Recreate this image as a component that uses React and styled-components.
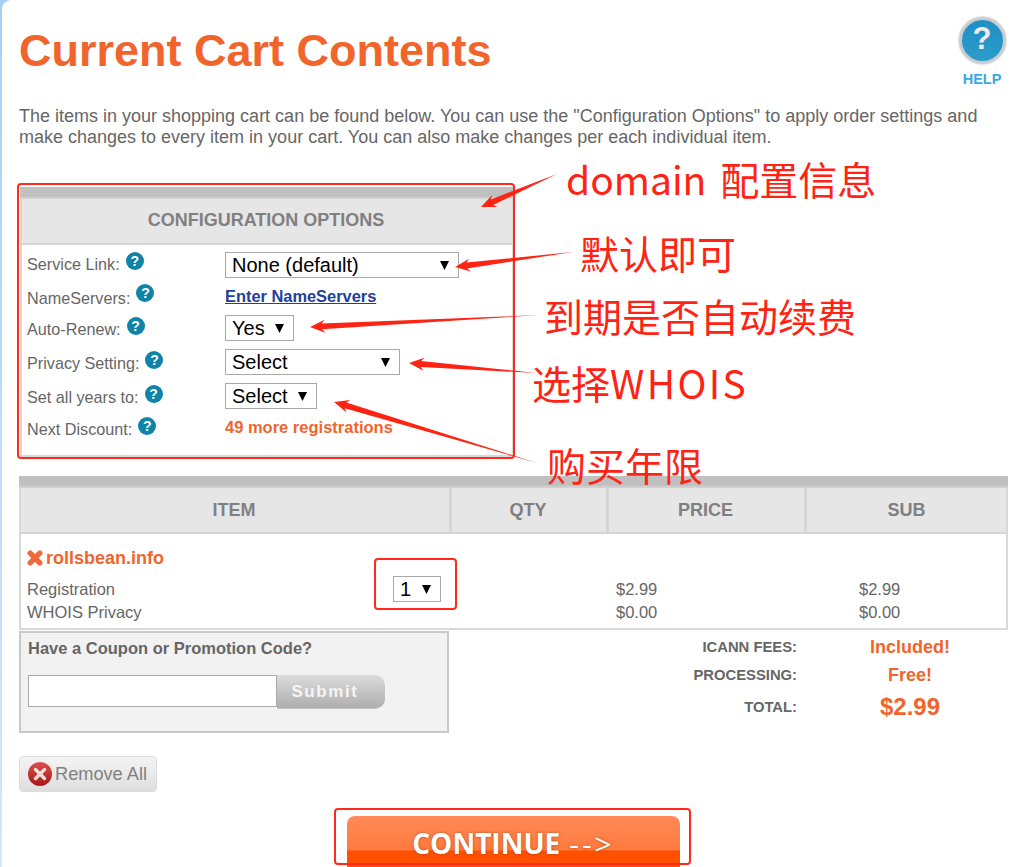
import React from 'react';
import styled, { createGlobalStyle } from 'styled-components';

const GlobalStyle = createGlobalStyle`
  html, body {
    margin: 0;
    padding: 0;
    height: 867px;
    overflow: hidden;
    background: linear-gradient(#a9cff6, #d4e7fb);
  }
  * { box-sizing: border-box; }
`;

const Page = styled.div`
  position: relative;
  width: 1016px;
  height: 867px;
  margin-left: 2px;
  padding: 26px 0 0 17px;
  overflow: hidden;
  background: #fff;
  border-top-left-radius: 9px;
  font-family: "Liberation Sans", Arial, sans-serif;
  color: #666;
`;

const TitleRow = styled.div`
  display: flex;
  justify-content: space-between;
  height: 70px;
`;

const Title = styled.h1`
  margin: 0;
  font-size: 45px;
  line-height: 50px;
  font-weight: 700;
  color: #f1652c;
`;

const HelpLink = styled.div`
  display: flex;
  flex-direction: column;
  align-items: center;
  width: 48px;
  margin: -9px 12px 0 0;
  font-size: 14.5px;
  font-weight: 700;
  line-height: 16px;
  color: #3ba8e0;
`;

const HelpBadge = styled.div`
  display: flex;
  align-items: center;
  justify-content: center;
  width: 47px;
  height: 47px;
  margin-bottom: 7px;
  padding-bottom: 3px;
  border: 3px solid #c9cccf;
  border-radius: 50%;
  background: linear-gradient(#1f8fc4, #2c9ccc);
  box-shadow: 0 0 2px #999;
  color: #ececec;
  font-size: 31px;
  font-weight: 700;
`;

const Intro = styled.p`
  width: 975px;
  margin: 10px 0 0;
  font-size: 18px;
  line-height: 21px;
`;

const Panel = styled.section`
  width: 494px;
  height: 270px;
  margin: 39px 0 0 1px;
  border: 2px solid #d8d8d8;
  border-top: 0;
`;

const GrayBar = styled.div`
  height: 12px;
  margin: 0 -2px;
  background: #c0c0c0;
  border-bottom: 2px solid #d0d0d0;
`;

const PanelHead = styled.div`
  display: flex;
  align-items: center;
  justify-content: center;
  height: 46px;
  padding: 0 2px 2px 0;
  background: #e6e6e6;
  border-bottom: 2px solid #d5d5d5;
  color: #808080;
  font-size: 18px;
  font-weight: 700;
`;

const OptionGrid = styled.div`
  display: grid;
  grid-template-columns: 198px 1fr;
  grid-template-rows: 31px 33px 34px 34px 34px 30px;
  padding: 4px 0 0 5px;
  align-items: center;
`;

const Label = styled.div`
  display: flex;
  align-items: flex-start;
  gap: 6px;
  margin-top: -2px;
  padding-top: ${p => p.$nudge || 0}px;
  font-size: 16.2px;
  line-height: 20px;
`;

const Info = styled.span`
  display: inline-flex;
  align-items: center;
  justify-content: center;
  width: 18px;
  height: 18px;
  margin-top: ${p => (p.$nudge ? -4 : -2)}px;
  border-radius: 50%;
  background: #0f83a8;
  color: #fff;
  font-size: 14px;
  font-weight: 700;
`;

const ValueCell = styled.div`
  margin-top: ${p => p.$lift || 0}px;
`;

const StrongLink = styled.a`
  font-size: 16.4px;
  font-weight: 700;
  color: #22409a;
  text-decoration: underline;
`;

const Discount = styled.span`
  font-size: 16.5px;
  font-weight: 700;
  color: #f1652c;
`;

const SelectShell = styled.div`
  position: relative;
  width: ${p => p.$width}px;
  height: 26px;
`;

const NativeSelect = styled.select`
  display: block;
  width: 100%;
  height: 100%;
  padding: 0 0 0 6px;
  border: 1px solid #a9a9a9;
  border-radius: 0;
  background: #fff;
  appearance: none;
  font-family: "Liberation Sans", Arial, sans-serif;
  font-size: 20px;
  color: #000;
`;

const Caret = styled.svg`
  position: absolute;
  top: 9px;
  right: 10px;
  width: 9px;
  height: 9px;
  pointer-events: none;
`;

const CartGrid = styled.div`
  width: 989px;
  margin: 19px 0 0;
  border: 2px solid #d8d8d8;
  border-top: 0;
`;

const HeadRow = styled.div`
  display: grid;
  grid-template-columns: 428px 3px 154px 3px 195px 3px 199px;
  height: 46px;
  border-bottom: 2px solid #d5d5d5;
  background: #d5d5d5;
`;

const HeadCell = styled.div`
  display: flex;
  align-items: center;
  justify-content: center;
  grid-column: ${p => p.$col};
  padding-right: ${p => (p.$col === 7 ? 0 : 2)}px;
  background: #e6e6e6;
  color: #808080;
  font-size: 18px;
  font-weight: 700;
`;

const ItemBody = styled.div`
  display: grid;
  grid-template-columns: 366px 223px 243px 1fr;
  grid-template-rows: 43px 23px 23px;
  height: 94px;
  padding-left: 6px;
  font-size: 16.5px;
  line-height: 20px;
  align-items: center;
`;

const Domain = styled.div`
  grid-column: 1 / -1;
  display: flex;
  align-items: center;
  gap: 3px;
  padding-top: 4px;
  font-size: 18px;
  font-weight: 700;
  color: #f1652c;
`;

const LineCell = styled.div`
  grid-column: ${p => p.$col};
  grid-row: ${p => p.$row};
`;

const QtyCell = styled.div`
  grid-column: 2;
  grid-row: 2 / 4;
  align-self: start;
  margin-top: -1px;
`;

const Bottom = styled.div`
  display: flex;
`;

const Coupon = styled.form`
  flex: none;
  width: 430px;
  height: 102px;
  margin-top: 1px;
  padding: 5px 7px;
  background: #f2f2f2;
  border: 2px solid #c8c8c8;
`;

const CouponTitle = styled.div`
  font-size: 16.5px;
  line-height: 20px;
  font-weight: 700;
  color: #666;
`;

const CouponRow = styled.div`
  display: flex;
  align-items: flex-start;
  margin-top: 17px;
`;

const CouponInput = styled.input`
  width: 249px;
  height: 32px;
  padding: 0 4px;
  border: 1px solid #a9a9a9;
  background: #fff;
`;

const SubmitButton = styled.button`
  width: 108px;
  height: 34px;
  padding: 0 12px 0 0;
  border: 0;
  border-radius: 0 10px 10px 0;
  background: linear-gradient(#dcdcdc, #aeaeae);
  border-bottom: 1px solid #c4c4c4;
  color: #f4f4f4;
  font-family: "Liberation Sans", Arial, sans-serif;
  font-size: 17px;
  font-weight: 700;
  letter-spacing: 1.6px;
`;

const Totals = styled.div`
  display: grid;
  grid-template-columns: 348px 226px;
  grid-template-rows: 28px 28px 36px;
  margin-top: 3px;
  align-items: center;
`;

const TotalLabel = styled.div`
  font-size: 14.8px;
  font-weight: 700;
  text-align: right;
  color: #666;
`;

const TotalValue = styled.div`
  font-size: ${p => p.$size || 18}px;
  font-weight: 700;
  text-align: center;
  color: #f1652c;
`;

const RemoveAll = styled.button`
  display: flex;
  align-items: center;
  gap: 2px;
  width: 138px;
  height: 36px;
  margin-top: 23px;
  padding: 0 0 0 7px;
  border: 1px solid #dcdcdc;
  border-radius: 4px;
  background: linear-gradient(#f4f4f4, #dedede);
  color: #808080;
  font-family: "Liberation Sans", Arial, sans-serif;
  font-size: 18.2px;
`;

const ContinueWrap = styled.div`
  display: flex;
  margin: 24px 0 0 328px;
`;

const ContinueButton = styled.button`
  display: flex;
  align-items: center;
  justify-content: center;
  gap: 9px;
  flex: none;
  width: 333px;
  height: 60px;
  padding: 0 0 6px;
  border: 0;
  border-radius: 8px 8px 0 0;
  background: linear-gradient(#ff8a58 0, #ff7a3e 57%, #ff5000 58%, #ff5000 100%);
  color: #fff;
  font-family: "Open Sans", sans-serif;
  font-size: 28px;
  font-weight: 700;
  text-shadow: 0 0 3px rgba(120, 50, 0, 0.6);
`;

const ContinueArrow = styled.span`
  font-size: 30px;
  font-weight: 400;
  letter-spacing: 3px;
`;

const Overlay = styled.svg`
  position: absolute;
  top: 0;
  left: -2px;
  width: 1018px;
  height: 867px;
  pointer-events: none;
`;

const RedBox = styled.div`
  position: absolute;
  left: ${p => p.$x - 2}px;
  top: ${p => p.$y}px;
  width: ${p => p.$w}px;
  height: ${p => p.$h}px;
  border: 2px solid #ff2a1a;
  border-radius: 4px;
  pointer-events: none;
`;

const Note = styled.div`
  position: absolute;
  left: ${p => p.$x - 2}px;
  top: ${p => p.$y}px;
  font-family: "Noto Sans CJK SC", "Noto Sans", sans-serif;
  font-size: 39px;
  line-height: 50px;
  word-spacing: 5px;
  white-space: nowrap;
  color: #ff2314;
`;

const NoteLatin = styled.span`
  letter-spacing: ${p => p.$track}px;
`;

const options = [
  { label: 'Service Link:', width: 234, value: 'None (default)' },
  { label: 'NameServers:', link: 'Enter NameServers', nudge: 4 },
  { label: 'Auto-Renew:', width: 69, value: 'Yes', lift: -4 },
  { label: 'Privacy Setting:', width: 175, value: 'Select', lift: -4 },
  { label: 'Set all years to:', width: 92, value: 'Select', lift: -4 },
  { label: 'Next Discount:', discount: '49 more registrations', lift: -5 },
];

const lines = [
  { label: 'Registration', price: '$2.99' },
  { label: 'WHOIS Privacy', price: '$0.00' },
];

// tail -> tip, tapered like a hand drawn marker arrow
const arrowPoints = ([x1, y1, x2, y2]) => {
  const len = Math.hypot(x2 - x1, y2 - y1);
  const ux = (x2 - x1) / len;
  const uy = (y2 - y1) / len;
  const at = (along, side) => `${x2 - ux * along - uy * side},${y2 - uy * along + ux * side}`;
  return [
    `${x1},${y1}`,
    at(12, 3),
    at(15, 6.5),
    at(0, 0),
    at(15, -6.5),
    at(12, -3),
  ].join(' ');
};

const arrows = [
  [557, 174, 481, 207],
  [573, 252, 455, 267],
  [540, 315, 310, 327],
  [536, 373, 409, 363],
  [537, 463, 334, 402],
];

const Dropdown = ({ width, value }) => (
  <SelectShell $width={width}>
    <NativeSelect defaultValue={value}>
      <option>{value}</option>
    </NativeSelect>
    <Caret viewBox="0 0 9 9"><path d="M0 0h9L4.5 9z" fill="#000" /></Caret>
  </SelectShell>
);

const RemoveIcon = () => (
  <svg width="26" height="26" viewBox="0 0 26 26" aria-hidden="true">
    <defs>
      <linearGradient id="removeFill" x1="0" y1="0" x2="0" y2="1">
        <stop offset="0" stopColor="#d9534f" />
        <stop offset="1" stopColor="#a51818" />
      </linearGradient>
    </defs>
    <circle cx="13" cy="13" r="12" fill="url(#removeFill)" />
    <path d="M8.5 8.5l9 9M17.5 8.5l-9 9" stroke="#f3dcdc" strokeWidth="3.4" strokeLinecap="round" />
  </svg>
);

const CrossIcon = () => (
  <svg width="16" height="16" viewBox="0 0 16 16" aria-hidden="true">
    <path d="M3.2 3.2l9.6 9.6M12.8 3.2l-9.6 9.6" stroke="#ee6a3c" strokeWidth="5.4" strokeLinecap="round" />
  </svg>
);

const App = () => (
  <>
    <GlobalStyle />
    <Page>
      <TitleRow>
        <Title>Current Cart Contents</Title>
        <HelpLink>
          <HelpBadge>?</HelpBadge>
          HELP
        </HelpLink>
      </TitleRow>
      <Intro>
        The items in your shopping cart can be found below. You can use the "Configuration Options" to apply order settings and make changes to every item in your cart. You can also make changes per each individual item.
      </Intro>

      <Panel>
        <GrayBar />
        <PanelHead>CONFIGURATION OPTIONS</PanelHead>
        <OptionGrid>
          {options.map(o => (
            <React.Fragment key={o.label}>
              <Label $nudge={o.nudge}>{o.label} <Info $nudge={o.nudge}>?</Info></Label>
              <ValueCell $lift={o.lift}>
                {o.value && <Dropdown width={o.width} value={o.value} />}
                {o.link && <StrongLink href="#">{o.link}</StrongLink>}
                {o.discount && <Discount>{o.discount}</Discount>}
              </ValueCell>
            </React.Fragment>
          ))}
        </OptionGrid>
      </Panel>

      <CartGrid>
        <GrayBar />
        <HeadRow>
          <HeadCell $col={1}>ITEM</HeadCell>
          <HeadCell $col={3}>QTY</HeadCell>
          <HeadCell $col={5}>PRICE</HeadCell>
          <HeadCell $col={7}>SUB</HeadCell>
        </HeadRow>
        <ItemBody>
          <Domain><CrossIcon />rollsbean.info</Domain>
          {lines.map((line, i) => (
            <React.Fragment key={line.label}>
              <LineCell $col={1} $row={i + 2}>{line.label}</LineCell>
              <LineCell $col={3} $row={i + 2}>{line.price}</LineCell>
              <LineCell $col={4} $row={i + 2}>{line.price}</LineCell>
            </React.Fragment>
          ))}
          <QtyCell>
            <Dropdown width={48} value="1" />
          </QtyCell>
        </ItemBody>
      </CartGrid>

      <Bottom>
        <Coupon>
          <CouponTitle>Have a Coupon or Promotion Code?</CouponTitle>
          <CouponRow>
            <CouponInput />
            <SubmitButton type="button">Submit</SubmitButton>
          </CouponRow>
        </Coupon>
        <Totals>
          <TotalLabel>ICANN FEES:</TotalLabel>
          <TotalValue>Included!</TotalValue>
          <TotalLabel>PROCESSING:</TotalLabel>
          <TotalValue>Free!</TotalValue>
          <TotalLabel>TOTAL:</TotalLabel>
          <TotalValue $size={24}>$2.99</TotalValue>
        </Totals>
      </Bottom>

      <RemoveAll type="button"><RemoveIcon />Remove All</RemoveAll>

      <ContinueWrap>
        <ContinueButton type="button">CONTINUE <ContinueArrow>--&gt;</ContinueArrow></ContinueButton>
      </ContinueWrap>

      <RedBox $x={17} $y={183} $w={498} $h={276} />
      <RedBox $x={374} $y={558} $w={83} $h={52} />
      <RedBox $x={334} $y={808} $w={357} $h={57} />
      <Overlay viewBox="0 0 1018 867" aria-hidden="true">
        {arrows.map(a => <polygon key={a.join()} points={arrowPoints(a)} fill="#ff2314" />)}
      </Overlay>
      <Note $x={566} $y={153}>domain 配置信息</Note>
      <Note $x={580} $y={227}>默认即可</Note>
      <Note $x={544} $y={290}>到期是否自动续费</Note>
      <Note $x={532} $y={357}>选择<NoteLatin $track={2.4}>WHOIS</NoteLatin></Note>
      <Note $x={547} $y={439}>购买年限</Note>
    </Page>
  </>
);

export default App;
